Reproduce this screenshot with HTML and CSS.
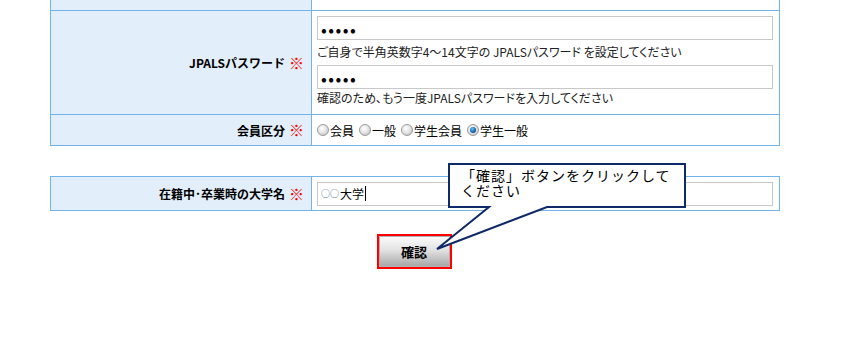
FILE: index.html
```html
<!DOCTYPE html>
<html lang="ja">
<head>
    <meta charset="UTF-8">
    <meta name="viewport" content="width=device-width, initial-scale=1.0">
    <title>会員登録</title>
    <link rel="stylesheet" href="styles.css">
</head>
<body>
    <div class="form-table first">
        <div class="form-row">
            <div class="form-label"></div>
            <div class="form-value"></div>
        </div>
        <div class="form-row">
            <div class="form-label">JPALSパスワード <span class="req">※</span></div>
            <div class="form-value stack">
                <input class="field" type="password" value="abcde">
                <div class="hint">ご自身で半角英数字4～14文字の JPALSパスワード を設定してください</div>
                <input class="field" type="password" value="abcde">
                <div class="hint last">確認のため、もう一度JPALSパスワードを入力してください</div>
            </div>
        </div>
        <div class="form-row">
            <div class="form-label">会員区分 <span class="req">※</span></div>
            <div class="form-value radios">
                <label class="radio-item"><span class="radio"></span>会員</label>
                <label class="radio-item"><span class="radio"></span>一般</label>
                <label class="radio-item"><span class="radio"></span>学生会員</label>
                <label class="radio-item"><span class="radio checked"></span>学生一般</label>
            </div>
        </div>
    </div>

    <div class="form-table second">
        <div class="form-row">
            <div class="form-label">在籍中･卒業時の大学名 <span class="req">※</span></div>
            <div class="form-value single">
                <div class="field fake"><span class="circles">○○</span>大学<span class="caret"></span></div>
            </div>
        </div>
    </div>

    <div class="actions">
        <div class="mark">
            <button class="submit" type="button">確認</button>
        </div>
    </div>

    <div class="callout">
        <svg class="callout-shape" width="260" height="96" viewBox="430 160 260 96">
            <path d="M449,164 H685 V207 H547 L437,249 L489,207 H449 Z" fill="#fff" stroke="#0e2a68" stroke-width="2" stroke-linejoin="miter"/>
        </svg>
        <div class="callout-text">「確認」ボタンをクリックして<br>ください</div>
    </div>
</body>
</html>
```

FILE: styles.css
```css
body {
    margin: 0;
    height: 337px;
    overflow: hidden;
    position: relative;
    background: #fff;
    color: #000;
    font-family: "Noto Sans CJK JP", "Noto Sans", sans-serif;
    font-size: 12px;
}
.form-table {
    width: 730px;
    margin-left: 50px;
    border: 1px solid #72b4ea;
    box-sizing: border-box;
}
.form-table.first {
    margin-top: -20px;
}
.form-table.second {
    margin-top: 30px;
}
.form-row {
    display: grid;
    grid-template-columns: 261px 1fr;
    border-top: 1px solid #72b4ea;
}
.form-row:first-child {
    border-top: none;
    min-height: 29px;
}
.form-label {
    background: #e2eefa;
    border-right: 1px solid #72b4ea;
    display: flex;
    align-items: center;
    justify-content: flex-end;
    padding-right: 7px;
    font-weight: bold;
}
.req {
    color: #ff0000;
    margin-left: 4px;
    font-size: 15px;
    line-height: 12px;
    font-weight: 900;
}
.form-value {
    padding: 0 6px 0 5px;
}
.stack {
    padding-top: 5px;
    padding-bottom: 7px;
}
.field {
    display: block;
    width: 100%;
    height: 24px;
    box-sizing: border-box;
    border: 1px solid #c8c8c8;
    padding: 0 3px;
    margin: 0;
    font-family: inherit;
    font-size: 12px;
    color: #000;
    background: #fff;
    outline: none;
}
input.field[type="password"] {
    font-size: 17px;
    letter-spacing: 1.5px;
}
.fake {
    display: flex;
    align-items: center;
}
.circles {
    font-size: 9px;
    color: #3a5f8a;
    margin-right: 1px;
}
.caret {
    display: inline-block;
    width: 1px;
    height: 15px;
    background: #000;
    margin-left: 1px;
}
.hint {
    line-height: 18px;
    margin: 3px 0 4px;
    color: #222;
    font-feature-settings: "palt";
}
.hint.last {
    margin: 0;
}
.radios {
    height: 30px;
    display: flex;
    align-items: center;
    gap: 5px;
}
.radio-item {
    display: flex;
    align-items: center;
}
.radio {
    width: 12px;
    height: 12px;
    box-sizing: border-box;
    border-radius: 50%;
    border: 1px solid #9a9a9a;
    background: radial-gradient(circle at 40% 35%, #ffffff 0%, #e6e6e6 45%, #b9b9b9 100%);
    position: relative;
    margin-right: 1px;
}
.radio.checked::after {
    content: "";
    position: absolute;
    left: 2px;
    top: 2px;
    width: 6px;
    height: 6px;
    border-radius: 50%;
    background: radial-gradient(circle at 40% 35%, #6cc4f4 0%, #1468b4 55%, #0a2f63 100%);
}
.single {
    height: 33px;
    display: flex;
    align-items: center;
}
.actions {
    width: 730px;
    margin: 23px 0 0 49px;
    display: flex;
    justify-content: center;
}
.mark {
    border: 2px solid #ff0000;
}
.submit {
    display: block;
    width: 71px;
    height: 31px;
    border: 1px solid #b0b0b0;
    background: linear-gradient(#fbfbfb, #e2e2e2 45%, #a8a8a8);
    font-family: inherit;
    font-size: 13px;
    font-weight: bold;
    color: #000;
    padding: 0;
}
.callout {
    position: absolute;
    left: 430px;
    top: 160px;
    width: 260px;
    height: 96px;
}
.callout-shape {
    display: block;
}
.callout-text {
    position: absolute;
    left: 31px;
    top: 8px;
    font-size: 14px;
    letter-spacing: 1px;
    line-height: 15px;
    white-space: nowrap;
}
```
